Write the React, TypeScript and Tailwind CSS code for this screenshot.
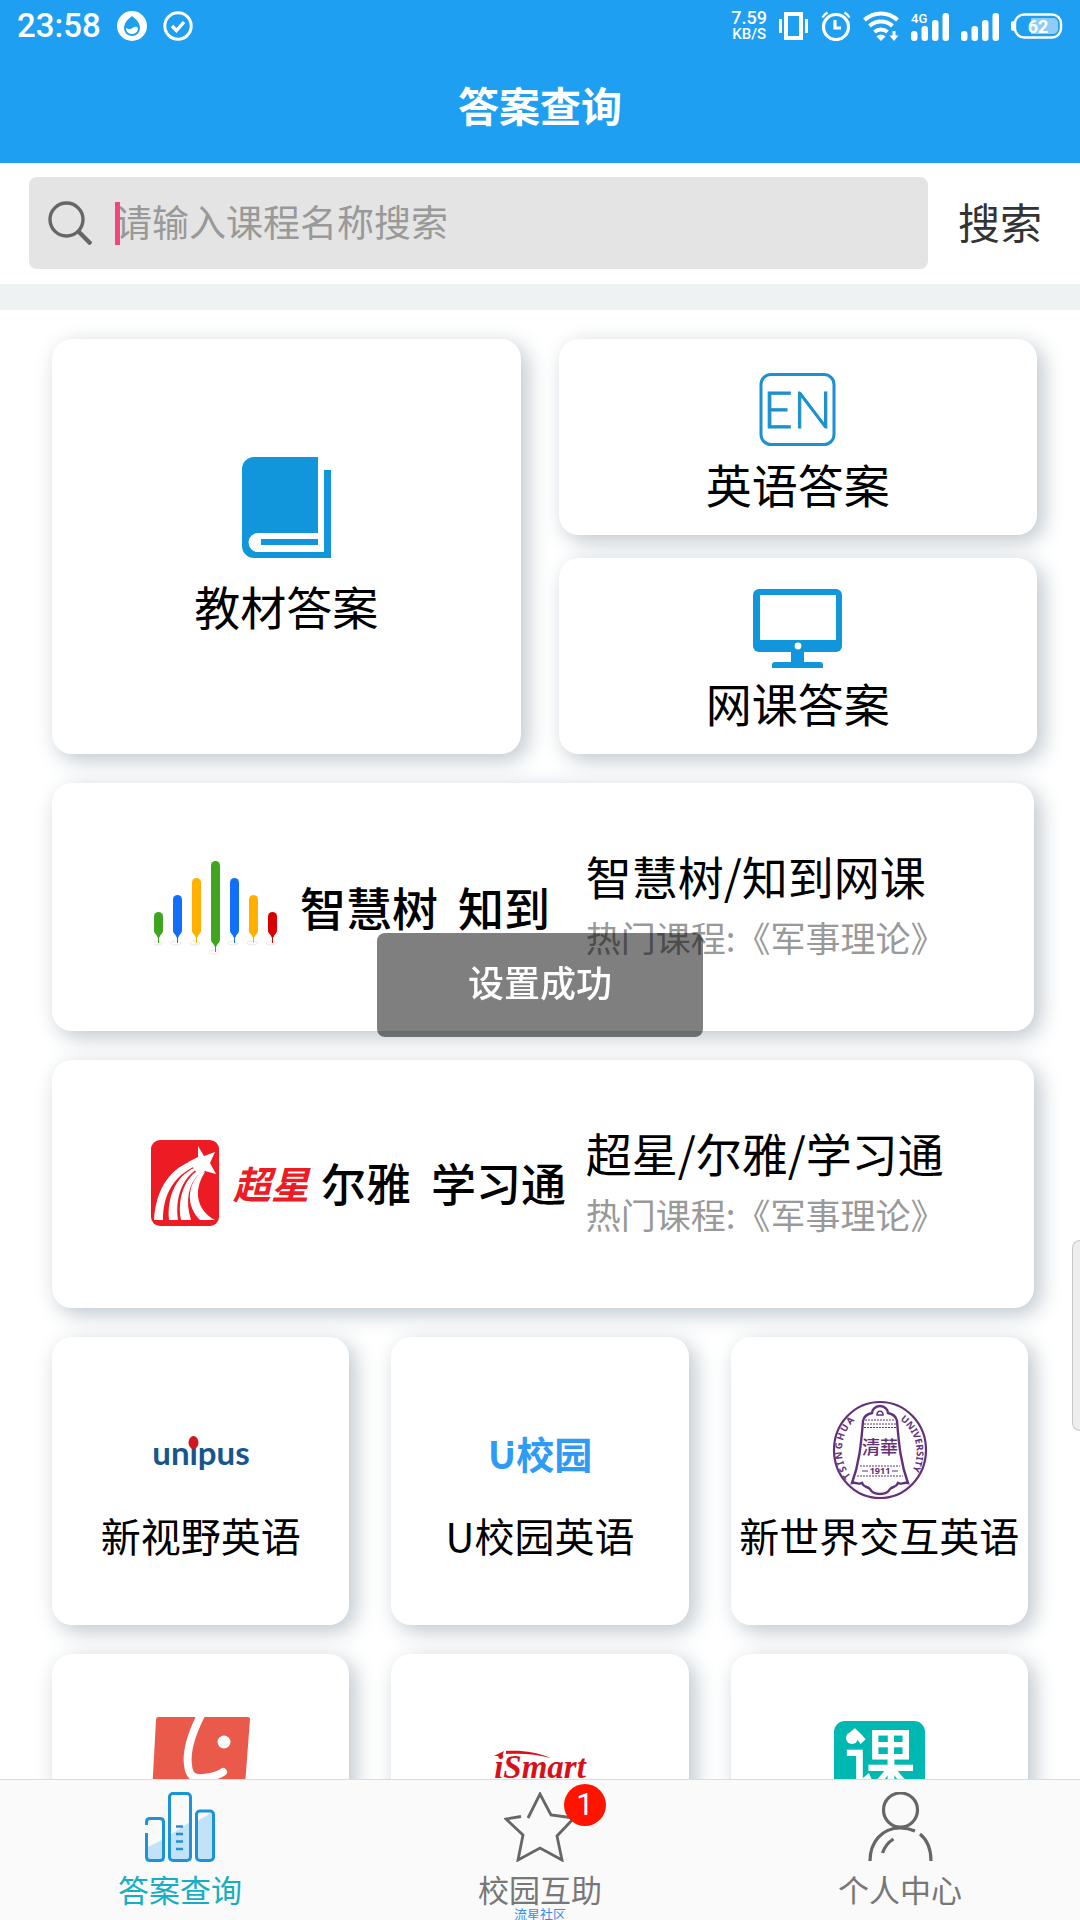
import React, { useState } from 'react';

// --- Status bar icons ---

const DropIcon = () => (
  <svg viewBox="0 0 30 30" className="w-[30px] h-[30px]">
    <circle cx="15" cy="15" r="15" fill="#fff" />
    <path d="M15 5c4 3 8 7 8 12a8 8 0 0 1-16 0c0-5 4-9 8-12z" fill="#1e9ff2" />
    <path d="M9 17c3 2 5 1 7-.5s4-.5 5 .5c0 3.500-2.500 6-6 6s-6-2.500-6-6z" fill="#fff" />
  </svg>
);

const CheckCircleIcon = () => (
  <svg viewBox="0 0 30 30" className="w-[30px] h-[30px]" fill="none" stroke="#fff" strokeWidth="3">
    <circle cx="15" cy="15" r="13.200" />
    <path d="M9 15l4.500 4.500L21 11" strokeWidth="3.400" />
  </svg>
);

const VibrateIcon = () => (
  <svg viewBox="0 0 30 28" className="w-[30px] h-[28px]" fill="none" stroke="#fff">
    <rect x="7" y="2" width="15" height="24" strokeWidth="4" />
    <path d="M1.500 7v14M27.500 7v14" strokeWidth="3" />
  </svg>
);

const AlarmIcon = () => (
  <svg viewBox="0 0 30 30" className="w-[30px] h-[30px]" fill="none" stroke="#fff" strokeWidth="3.200">
    <circle cx="15" cy="16" r="12.500" />
    <path d="M14 9v8h6" />
    <path d="M1.500 6.500a15 15 0 0 1 5-5M28.500 6.500a15 15 0 0 0-5-5" strokeWidth="2.400" />
  </svg>
);

const WifiIcon = () => (
  <svg viewBox="0 0 36 30" className="w-[36px] h-[30px]" fill="none" stroke="#fff" strokeWidth="4">
    <path d="M1.500 9a24 24 0 0 1 33 0" />
    <path d="M6.500 15a17 17 0 0 1 23 0" />
    <path d="M11.500 21a10 10 0 0 1 13 0" />
    <path d="M13.500 25.500a6 6 0 0 1 9 0L18 30z" fill="#fff" stroke="none" />
    <path d="M31 20v5" strokeWidth="3" />
    <path d="M26.500 24.500h9L31 30z" fill="#fff" stroke="none" />
  </svg>
);

const SignalIcon = ({ label }: { label?: string }) => (
  <svg viewBox="0 0 38 29" className="w-[38px] h-[29px]" fill="#fff">
    <rect x="0" y="19" width="6.500" height="10" rx="3" />
    <rect x="10.500" y="14" width="6.500" height="15" rx="3" />
    <rect x="21" y="8" width="6.500" height="21" rx="3" />
    <rect x="31.500" y="1" width="6.500" height="28" rx="3" />
    {label && (
      <text x="0" y="11" fontFamily="Roboto" fontWeight="500" fontSize="13">{label}</text>
    )}
  </svg>
);

const BatteryIcon = () => (
  <svg viewBox="0 0 52 26" className="w-[52px] h-[26px]">
    <path d="M3 9a4 4 0 0 0 0 8z" fill="#fff" stroke="#fff" strokeWidth="2" />
    <rect x="4" y="1.500" width="46" height="23" rx="9" fill="none" stroke="#fff" strokeWidth="2.400" />
    <path d="M20 5h22a5 5 0 0 1 5 5v6a5 5 0 0 1-5 5H20z" fill="#8fcdf8" />
    <text x="27" y="19.500" textAnchor="middle" fontFamily="Roboto" fontWeight="700" fontSize="18" fill="#fff">62</text>
  </svg>
);

const SearchIcon = () => (
  <svg viewBox="0 0 44 44" className="w-[44px] h-[44px] shrink-0" fill="none" stroke="#666">
    <circle cx="18.500" cy="18.500" r="16.500" strokeWidth="3.400" />
    <path d="M30 30l13 13" strokeWidth="4.400" />
  </svg>
);

// --- Category icons ---

const BookIcon = () => (
  <svg viewBox="0 0 89 101" className="w-[89px] h-[101px]">
    <path d="M12 0h64v76H16a9.500 9.500 0 0 0 0 19h66V13h7v88H12A12 12 0 0 1 0 89V12A12 12 0 0 1 12 0z" fill="#1296db" />
    <path d="M19 82h57v6H19z" fill="#1296db" />
  </svg>
);

const EnglishIcon = () => (
  <svg viewBox="0 0 90 90" className="w-[90px] h-[90px]">
    <rect x="8" y="9.500" width="73" height="70" rx="10" fill="none" stroke="#1c90d0" strokeWidth="3" />
    <text x="44.500" y="63" textAnchor="middle" fontFamily="Lato" fontWeight="300" fontSize="52" fill="#1c90d0" stroke="#1c90d0" strokeWidth="1">EN</text>
  </svg>
);

const MonitorIcon = () => (
  <svg viewBox="0 0 90 90" className="w-[90px] h-[90px]">
    <rect x="0" y="5" width="89" height="63" rx="6" fill="#1296db" />
    <rect x="7" y="11" width="76" height="45" fill="#fff" />
    <circle cx="45" cy="62" r="3.400" fill="#fff" />
    <path d="M38 68h13v10h16a3 3 0 0 1 3 3v3H19v-3a3 3 0 0 1 3-3h16z" fill="#1296db" />
  </svg>
);

// --- Platform logos ---

const BALLOONS = [
  { x: 0, top: 55, bottom: 79, color: '#3fa51e' },
  { x: 19, top: 38, bottom: 79, color: '#116ff8' },
  { x: 38, top: 21, bottom: 79, color: '#ffb000' },
  { x: 57, top: 4, bottom: 88, color: '#3fa51e' },
  { x: 76, top: 21, bottom: 79, color: '#116ff8' },
  { x: 95, top: 38, bottom: 79, color: '#ffb000' },
  { x: 114, top: 55, bottom: 79, color: '#d90000' },
];

const ZhihuishuLogo = () => (
  <div className="flex items-center pl-[3px]">
    <svg viewBox="0 0 123 98" className="w-[123px] h-[98px]">
      {BALLOONS.map((b) => (
        <g key={b.x} fill={b.color}>
          <ellipse cx={b.x + 3} cy={b.bottom + 7} rx="5" ry="2" fill="none" stroke="#f0e4e2" />
          <rect x={b.x} y={b.top} width="9" height={b.bottom - b.top - 1} rx="4.500" />
          <path d={`M${b.x + 1} ${b.bottom - 4}h7l-3 6v5h-1v-5z`} />
        </g>
      ))}
    </svg>
    <div className="flex gap-5 pl-[23px] text-[46px] leading-[60px] font-medium">
      <span>智慧树</span>
      <span>知到</span>
    </div>
  </div>
);

const ChaoxingLogo = () => (
  <div className="flex items-center">
    <svg viewBox="0 0 68 86" className="w-[68px] h-[86px] shrink-0">
      <rect width="68" height="86" rx="9" fill="#ed1c24" />
      <g fill="#fff">
        <path d="M47 6l6 10 11-4-5 11 6 11-11-3-6 5-7-10-4-4 10-5z" />
        <path d="M44 20C20 27 5 48 3 80h9c0-25 10-43 32-54z" />
        <path d="M43 28C24 37 16 58 18 80h9c-3-22 4-41 19-51z" />
        <path d="M46 31C33 40 26 60 30 80h10c-6-19-3-36 9-47z" />
        <path d="M49 33C36 46 35 66 49 80h15C47 71 41 52 54 32z" />
      </g>
    </svg>
    <span className="pl-[14px] text-[38px] leading-[60px] font-bold italic text-[#ed1c24]">超星</span>
    <div className="flex gap-5 pl-3 text-[45px] leading-[60px] font-medium">
      <span>尔雅</span>
      <span>学习通</span>
    </div>
  </div>
);

const UnipusLogo = () => (
  <svg viewBox="0 0 100 100" className="w-[100px] h-[100px]">
    <text x="50" y="65" textAnchor="middle" fontFamily="Lato" fontWeight="700" fontSize="33" fill="#17558c">unipus</text>
    <ellipse cx="42.500" cy="42.500" rx="5" ry="6.500" fill="#cf1820" />
  </svg>
);

const UcampusLogo = () => (
  <svg viewBox="0 0 104 100" className="w-[104px] h-[100px]">
    <text x="52" y="69" textAnchor="middle" fontFamily="Noto Sans CJK SC" fontWeight="700" fontSize="38" fill="#2f9bf5">U校园</text>
    <path d="M18 47h10" stroke="#fff" strokeWidth="2" />
  </svg>
);

const TsinghuaLogo = () => (
  <svg viewBox="0 0 100 100" className="w-[100px] h-[100px]" fill="none" stroke="#63307a">
    <ellipse cx="51" cy="50" rx="46" ry="48" strokeWidth="2.200" />
    <path d="M43 13c0-3 3-7 8-7s8 4 8 7c5 1 8 3 9 8 2 25 4 43 11 62-5-1-7 2-10 0-2 5-5 3-8 6-2 4-5 5-10 5s-8-1-10-5c-3-3-6-1-8-6-3 2-5-1-10 0 7-19 9-37 11-62 1-5 4-7 9-8z" strokeWidth="2.400" />
    <path d="M48 15c0-5 6-5 6 0z" strokeWidth="1.500" />
    <path d="M36 20h30M35 24h32M35 27.500h32M31 66h40M28 76h46" strokeWidth="1" strokeDasharray="2 1" />
    <path d="M33 71h6M63 71h6" strokeWidth="1.200" />
    <g fill="#63307a" stroke="none">
      <text x="51" y="54" textAnchor="middle" fontFamily="Noto Sans CJK TC" fontWeight="500" fontSize="18">清華</text>
      <text x="51" y="74" textAnchor="middle" fontFamily="Noto Sans" fontWeight="700" fontSize="9">1911</text>
      <path id="seal-left" d="M22 76A37 39 0 0 1 34 15" fill="none" />
      <path id="seal-right" d="M71 20A37 39 0 0 1 77 80" fill="none" />
      <text fontFamily="Noto Sans" fontWeight="700" fontSize="9.500">
        <textPath href="#seal-left">{'T\u2009S\u2009I\u2009N\u2009G\u2009H\u2009U\u2009A'}</textPath>
      </text>
      <text fontFamily="Noto Sans" fontWeight="700" fontSize="9.500">
        <textPath href="#seal-right">UNIVERSITY</textPath>
      </text>
    </g>
  </svg>
);

const MangoLogo = () => (
  <svg viewBox="0 0 100 100" className="w-[100px] h-[100px]">
    <path d="M8 0h89q2 0 2 2l-7 93q0 3-3 3H3q-3 0-3-3L5 3q0-3 3-3z" fill="#e95a4a" />
    <path d="M50-2C42 14 35 34 37 48c1 12 7 14 15 13 8-1 15-2 20-6" fill="none" stroke="#fff" strokeWidth="8" strokeLinecap="round" />
    <circle cx="73" cy="25" r="6.500" fill="#fff" />
  </svg>
);

const IsmartLogo = () => (
  <svg viewBox="0 0 100 100" className="w-[100px] h-[100px]">
    <text x="50" y="61" textAnchor="middle" fontFamily="Liberation Serif" fontWeight="700" fontStyle="italic" fontSize="33" fill="#d8101a">iSmart</text>
    <path d="M4 39l10-5-2 5zM16 34c16-1 30 1 45 7-15-4-29-5-45-4z" fill="#d8101a" />
  </svg>
);

const KeLogo = () => (
  <svg viewBox="0 0 100 100" className="w-[100px] h-[100px]">
    <rect x="5" y="4" width="91" height="92" rx="11" fill="#00b8b2" />
    <text x="51" y="71" textAnchor="middle" fontFamily="Noto Sans CJK SC" fontWeight="500" fontSize="72" fill="#fff">课</text>
    <circle cx="23" cy="21" r="6" fill="#fff" />
  </svg>
);

// --- Tab bar icons ---

const BarsIcon = () => (
  <svg viewBox="0 0 70 70" className="w-[70px] h-[70px]" fill="none" stroke="#1b93d8" strokeWidth="3">
    <path d="M1 56l18-9v22H1zM25 43l20-13v38H25zM52 29l16-9v48H52z" fill="#c3e1f7" stroke="none" />
    <path d="M1.500 33v-3q0-3.500 3.500-3.500h10q3.500 0 3.500 3.500v35q0 3.500-3.500 3.500H5q-3.500 0-3.500-3.500V41" />
    <rect x="24.500" y="1.500" width="21" height="67" rx="3.500" />
    <rect x="51.500" y="19" width="17" height="49.500" rx="3.500" />
    <path d="M31 34.500h7M31 42h7M31 49.500h7M31 57h7" strokeWidth="2.400" />
  </svg>
);

const StarIcon = () => (
  <svg viewBox="0 0 72 70" className="w-[72px] h-[70px]" fill="none" stroke="#666" strokeWidth="2.800">
    <path d="M24 26L36 2l11 21 23 3-17 18 5 24-22-12-22 12 5-25L2 27l15-2.500" />
  </svg>
);

const PersonIcon = () => (
  <svg viewBox="0 0 65 70" className="w-[65px] h-[70px]" fill="none" stroke="#666" strokeWidth="3.200">
    <circle cx="32.500" cy="18" r="17" />
    <path d="M2 69C2 50 14 36 32 36q8 0 15 3" />
    <path d="M52 42q11 9 11 27" />
    <path d="M14.500 61q3-9 11-14" />
  </svg>
);

const cardClass =
  'bg-white rounded-[20px] shadow-[6px_6px_22px_#bcc5cc]';

const PLATFORMS = [
  { logo: <ZhihuishuLogo />, title: '智慧树/知到网课', hint: '热门课程:《军事理论》' },
  { logo: <ChaoxingLogo />, title: '超星/尔雅/学习通', hint: '热门课程:《军事理论》' },
];

const COURSES = [
  { id: 'unipus', logo: <UnipusLogo />, label: '新视野英语' },
  { id: 'ucampus', logo: <UcampusLogo />, label: 'U校园英语' },
  { id: 'tsinghua', logo: <TsinghuaLogo />, label: '新世界交互英语' },
  { id: 'mango', logo: <MangoLogo /> },
  { id: 'ismart', logo: <IsmartLogo /> },
  { id: 'ke', logo: <KeLogo /> },
];

const TABS = [
  { label: '答案查询', icon: <BarsIcon />, badge: 0 },
  { label: '校园互助', icon: <StarIcon />, badge: 1 },
  { label: '个人中心', icon: <PersonIcon />, badge: 0 },
];

const StatusBar = () => (
  <div className="flex h-[50px] items-center justify-between pt-2 pr-[17px] pb-[6px] pl-[17px] font-[Roboto,sans-serif] text-white">
    <div className="flex items-center gap-4">
      <span className="text-[33px] leading-9 font-medium">23:58</span>
      <DropIcon />
      <CheckCircleIcon />
    </div>
    <div className="flex items-center gap-3">
      <div className="text-center font-medium">
        <div className="text-[18px] leading-4">7.59</div>
        <div className="text-[15px] leading-4">KB/S</div>
      </div>
      <VibrateIcon />
      <AlarmIcon />
      <WifiIcon />
      <SignalIcon label="4G" />
      <SignalIcon />
      <BatteryIcon />
    </div>
  </div>
);

const App = () => {
  const [keyword, setKeyword] = useState('');
  const [activeTab, setActiveTab] = useState('答案查询');

  return (
    <div className="flex h-screen flex-col bg-white font-['Noto_Sans_CJK_SC',sans-serif] text-black">
      <header className="bg-[#1e9ff2]">
        <StatusBar />
        <h1 className="pt-6 pb-[29px] text-center text-[41px] leading-[60px] font-bold text-white">答案查询</h1>
      </header>

      <form className="flex pt-[14px] pb-[15px] pl-[29px]" onSubmit={(e) => e.preventDefault()}>
        <label className="flex h-[92px] flex-1 items-center gap-[23px] rounded-lg bg-[#e4e4e4] pl-[19px]">
          <SearchIcon />
          <div className="relative flex-1">
            <input
              type="text"
              value={keyword}
              onChange={(e) => setKeyword(e.target.value)}
              placeholder="请输入课程名称搜索"
              aria-label="请输入课程名称搜索"
              className="block h-[56px] w-full bg-transparent pb-1 text-[37px] text-[#333] outline-none placeholder:text-[#999]"
            />
            <span className="absolute left-0 top-[7px] h-[43px] w-[5px] bg-[#f4457f]" />
          </div>
        </label>
        <button type="submit" className="pr-[38px] pb-1 pl-[30px] text-[42px] leading-[60px] text-[#333]">搜索</button>
      </form>

      <div className="h-[26px] shrink-0 bg-[#eef2f3]" />

      <main className="flex min-h-0 flex-1 flex-col gap-[29px] overflow-y-auto pt-[29px] pb-[29px] pl-[52px] [scrollbar-width:none]">
        <section className="grid shrink-0 grid-cols-[49fr_50fr] gap-[38px] pr-[43px]">
          <a href="#textbook" className={`${cardClass} flex flex-col items-center justify-center gap-[19px] pb-1`}>
            <BookIcon />
            <span className="text-[46px] leading-[56px]">教材答案</span>
          </a>
          <div className="flex flex-col gap-[23px]">
            <a href="#english" className={`${cardClass} flex flex-col items-center pt-[26px] pb-[24px]`}>
              <EnglishIcon />
              <span className="text-[46px] leading-[56px]">英语答案</span>
            </a>
            <a href="#online" className={`${cardClass} flex flex-col items-center pt-[26px] pb-[24px]`}>
              <MonitorIcon />
              <span className="text-[46px] leading-[56px]">网课答案</span>
            </a>
          </div>
        </section>

        <section className="flex shrink-0 flex-col gap-[29px] pr-[46px]">
          {PLATFORMS.map((p) => (
            <a
              key={p.title}
              href="#platform"
              className={`${cardClass} grid grid-cols-[25fr_21fr] items-center pt-[61px] pb-[63px]`}
            >
              <div className="pl-[99px] whitespace-nowrap">{p.logo}</div>
              <div className="flex flex-col whitespace-nowrap">
                <span className="text-[46px] leading-[62px]">{p.title}</span>
                <span className="text-[35px] leading-[62px] text-[#999]">{p.hint}</span>
              </div>
            </a>
          ))}
        </section>

        <section className="grid shrink-0 grid-cols-3 gap-x-[42px] gap-y-[29px] pr-[52px]">
          {COURSES.map((c) => (
            <a key={c.id} href={`#${c.id}`} aria-label={c.label ?? c.id} className={`${cardClass} flex flex-col items-center gap-2 pt-[63px] pb-[63px]`}>
              {c.logo}
              {c.label && <span className="text-[40px] leading-[54px] whitespace-nowrap">{c.label}</span>}
            </a>
          ))}
        </section>
      </main>

      <nav className="relative grid grid-cols-3 border-t border-[#dcdcdc] bg-[#fafafa] pt-3 pb-[13px]">
        {TABS.map((t) => (
          <button key={t.label} type="button" onClick={() => setActiveTab(t.label)} className="flex flex-col items-center gap-2">
            <span className="relative">
              {t.icon}
              {t.badge > 0 && (
                <span className="absolute -top-2 left-[60px] h-[42px] w-[42px] rounded-full bg-[#ff1400] text-center font-[Roboto,sans-serif] text-[31px] leading-[42px] text-white">
                  {t.badge}
                </span>
              )}
            </span>
            <span className={`text-[31px] leading-[37px] ${activeTab === t.label ? 'text-[#15aec2]' : 'text-[#777]'}`}>
              {t.label}
            </span>
          </button>
        ))}
        <span className="absolute inset-x-0 bottom-0 text-center text-[13px] leading-[13px] text-[#3a8bf0]">流星社区</span>
      </nav>

      {/* Edge panel handle */}
      <div className="fixed right-0 top-[1240px] h-[191px] w-2 rounded-l-lg border border-r-0 border-[#c8c8c8] bg-[#eee]" />

      {/* Toast, centred in the area below the status bar */}
      <div className="pointer-events-none fixed inset-x-0 top-[50px] bottom-0 flex items-center justify-center">
        <div role="status" className="rounded-lg bg-black/50 px-[91px] pt-[21px] pb-[29px] text-[36px] leading-[54px] font-medium text-white">
          设置成功
        </div>
      </div>
    </div>
  );
};

export default App;
